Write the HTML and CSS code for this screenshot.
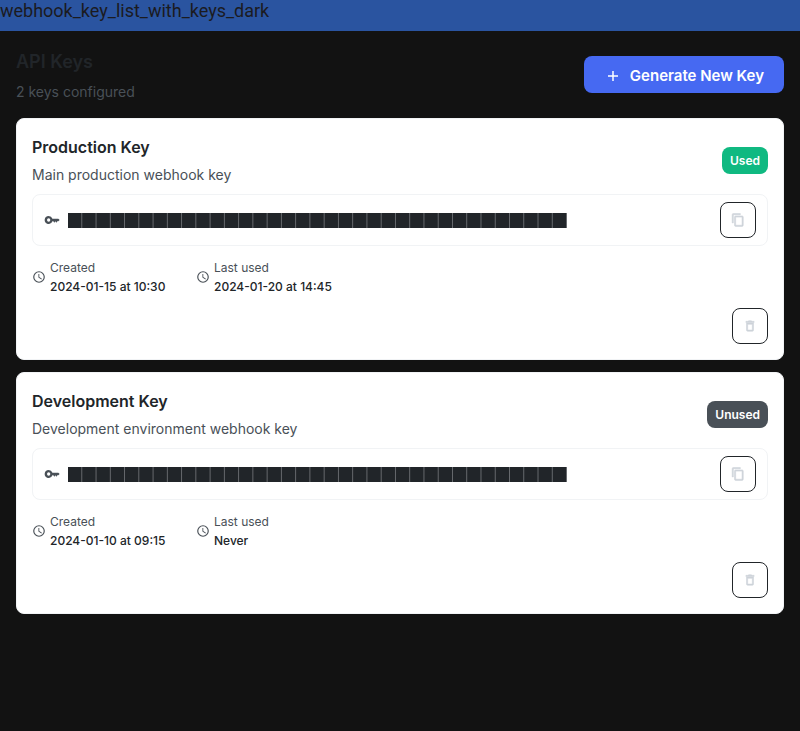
FILE: index.html
```html
<!DOCTYPE html>
<html lang="en">
<head>
<meta charset="utf-8">
<meta name="viewport" content="width=device-width, initial-scale=1">
<title>API Keys</title>
<link rel="stylesheet" href="styles.css">
</head>
<body>
<svg class="sprite" aria-hidden="true">
  <symbol id="key" viewBox="0 0 24 24"><path d="M12.650 10A6 6 0 0 0 7 6a6 6 0 1 0 5.650 8H14l1.500 2 1.500-2 1.500 2 1.500-2h1.500L23.500 12l-2-2zM7 14.500a2.500 2.500 0 1 1 0-5 2.500 2.500 0 0 1 0 5z"/></symbol>
  <symbol id="clock" viewBox="0 0 24 24"><path d="M12 2a10 10 0 1 0 0 20 10 10 0 0 0 0-20zm0 18a8 8 0 1 1 0-16 8 8 0 0 1 0 16zm.5-13H11v6l5.200 3.200.8-1.300-4.500-2.700z"/></symbol>
  <symbol id="copy" viewBox="0 0 24 24"><path d="M16 1H4a2 2 0 0 0-2 2v14h2V3h12V1zm3 4H8a2 2 0 0 0-2 2v14a2 2 0 0 0 2 2h11a2 2 0 0 0 2-2V7a2 2 0 0 0-2-2zm0 16H8V7h11v14z"/></symbol>
  <symbol id="trash" viewBox="0 0 24 24"><path d="M6 19a2 2 0 0 0 2 2h8a2 2 0 0 0 2-2V7H6v12zM8 9h8v10H8V9zm7.500-5-1-1h-5l-1 1H5v2h14V4z"/></symbol>
  <symbol id="mask" viewBox="0 0 499 15"><defs><pattern id="cells" width="14.257" height="15" patternUnits="userSpaceOnUse"><rect width="14.257" height="15" fill="#888b8e"/><rect width="13.6" height="15" fill="#212529"/></pattern></defs><rect width="499" height="15" fill="url(#cells)"/></symbol>
</svg>
<div class="banner">webhook_key_list_with_keys_dark</div>
<main class="page">
  <header class="page-head">
    <div>
      <h1>API Keys</h1>
      <p class="count">2 keys configured</p>
    </div>
    <button class="generate" type="button"><svg viewBox="0 0 12 12" aria-hidden="true"><path d="M6 1v10M1 6h10"/></svg>Generate New Key</button>
  </header>
  <article class="card">
    <div class="card-head">
      <div>
        <h2>Production Key</h2>
        <p class="description">Main production webhook key</p>
      </div>
      <span class="badge used">Used</span>
    </div>
    <div class="secret">
      <svg class="key-icon" aria-hidden="true"><use href="#key"/></svg>
      <svg class="mask" role="img" aria-label="Masked key"><use href="#mask"/></svg>
      <button class="icon-button" type="button" aria-label="Copy key"><svg aria-hidden="true"><use href="#copy"/></svg></button>
    </div>
    <dl class="dates">
      <div class="date"><svg aria-hidden="true"><use href="#clock"/></svg><div><dt>Created</dt><dd>2024-01-15 at 10:30</dd></div></div>
      <div class="date"><svg aria-hidden="true"><use href="#clock"/></svg><div><dt>Last used</dt><dd>2024-01-20 at 14:45</dd></div></div>
    </dl>
    <div class="actions"><button class="icon-button" type="button" aria-label="Delete key"><svg aria-hidden="true"><use href="#trash"/></svg></button></div>
  </article>
  <article class="card">
    <div class="card-head">
      <div>
        <h2>Development Key</h2>
        <p class="description">Development environment webhook key</p>
      </div>
      <span class="badge">Unused</span>
    </div>
    <div class="secret">
      <svg class="key-icon" aria-hidden="true"><use href="#key"/></svg>
      <svg class="mask" role="img" aria-label="Masked key"><use href="#mask"/></svg>
      <button class="icon-button" type="button" aria-label="Copy key"><svg aria-hidden="true"><use href="#copy"/></svg></button>
    </div>
    <dl class="dates">
      <div class="date"><svg aria-hidden="true"><use href="#clock"/></svg><div><dt>Created</dt><dd>2024-01-10 at 09:15</dd></div></div>
      <div class="date"><svg aria-hidden="true"><use href="#clock"/></svg><div><dt>Last used</dt><dd>Never</dd></div></div>
    </dl>
    <div class="actions"><button class="icon-button" type="button" aria-label="Delete key"><svg aria-hidden="true"><use href="#trash"/></svg></button></div>
  </article>
</main>
</body>
</html>
```
FILE: styles.css
```css
* { box-sizing: border-box; }
body, h1, h2, p, dl, dd { margin: 0; }
body {
  background: #121212;
  color: #212529;
  font: 14px/20px Inter, sans-serif;
}
button { font: inherit; cursor: pointer; }
svg { flex: none; fill: currentColor; }
.sprite { position: absolute; width: 0; height: 0; }
.banner {
  padding-bottom: 9px;
  background: #2a54a0;
  color: #1b1b1f;
  font: 18px/22px Roboto, sans-serif;
}
.page { padding: 16px; }
.page-head {
  display: flex;
  align-items: center;
  justify-content: space-between;
  margin-bottom: 16px;
}
h1 { font-size: 18px; line-height: 30px; font-weight: 600; }
.count { margin-top: 4px; color: #495057; line-height: 21px; }
.generate {
  display: flex;
  align-items: center;
  gap: 10px;
  padding: 9px 20px 7px 22px;
  border: 0;
  border-radius: 8px;
  background: #4669f2;
  color: #fff;
  font-size: 15px;
  line-height: 21px;
  font-weight: 600;
}
.generate svg { width: 14px; height: 12px; stroke: currentColor; stroke-width: 1.500; }
.card {
  padding: 15px;
  border: 1px solid #f1f3f5;
  border-radius: 8px;
  background: #fff;
}
.card + .card { margin-top: 12px; }
.card-head {
  display: flex;
  align-items: center;
  justify-content: space-between;
  margin-bottom: 8px;
}
h2 { font-size: 16px; line-height: 26px; font-weight: 600; }
.description { margin-top: 4px; color: #495057; line-height: 22px; }
.badge {
  padding: 4px 8px;
  border-radius: 8px;
  background: #495057;
  color: #fff;
  font-size: 12px;
  line-height: 19px;
  font-weight: 600;
}
.badge.used { background: #10b981; }
.secret {
  display: flex;
  align-items: center;
  gap: 8px;
  padding: 7px 11px;
  border: 1px solid #f1f3f5;
  border-radius: 8px;
}
.key-icon { width: 16px; height: 16px; color: #495057; }
.mask { width: 499px; height: 15px; flex-shrink: 1; }
.icon-button {
  display: grid;
  place-items: center;
  width: 36px;
  height: 36px;
  margin-left: auto;
  padding: 0;
  border: 1px solid #212529;
  border-radius: 8px;
  background: transparent;
  color: #ced4da;
}
.icon-button svg { width: 14px; height: 14px; stroke: currentColor; }
.dates { display: flex; gap: 24px; margin-top: 12px; }
.date { display: flex; align-items: center; gap: 4px; min-width: 140px; }
.date svg { width: 14px; height: 14px; color: #495057; }
dt { color: #495057; font-size: 12px; line-height: 19px; }
dd { font-size: 12px; line-height: 19px; font-weight: 500; }
.actions { display: flex; margin-top: 12px; }
```
